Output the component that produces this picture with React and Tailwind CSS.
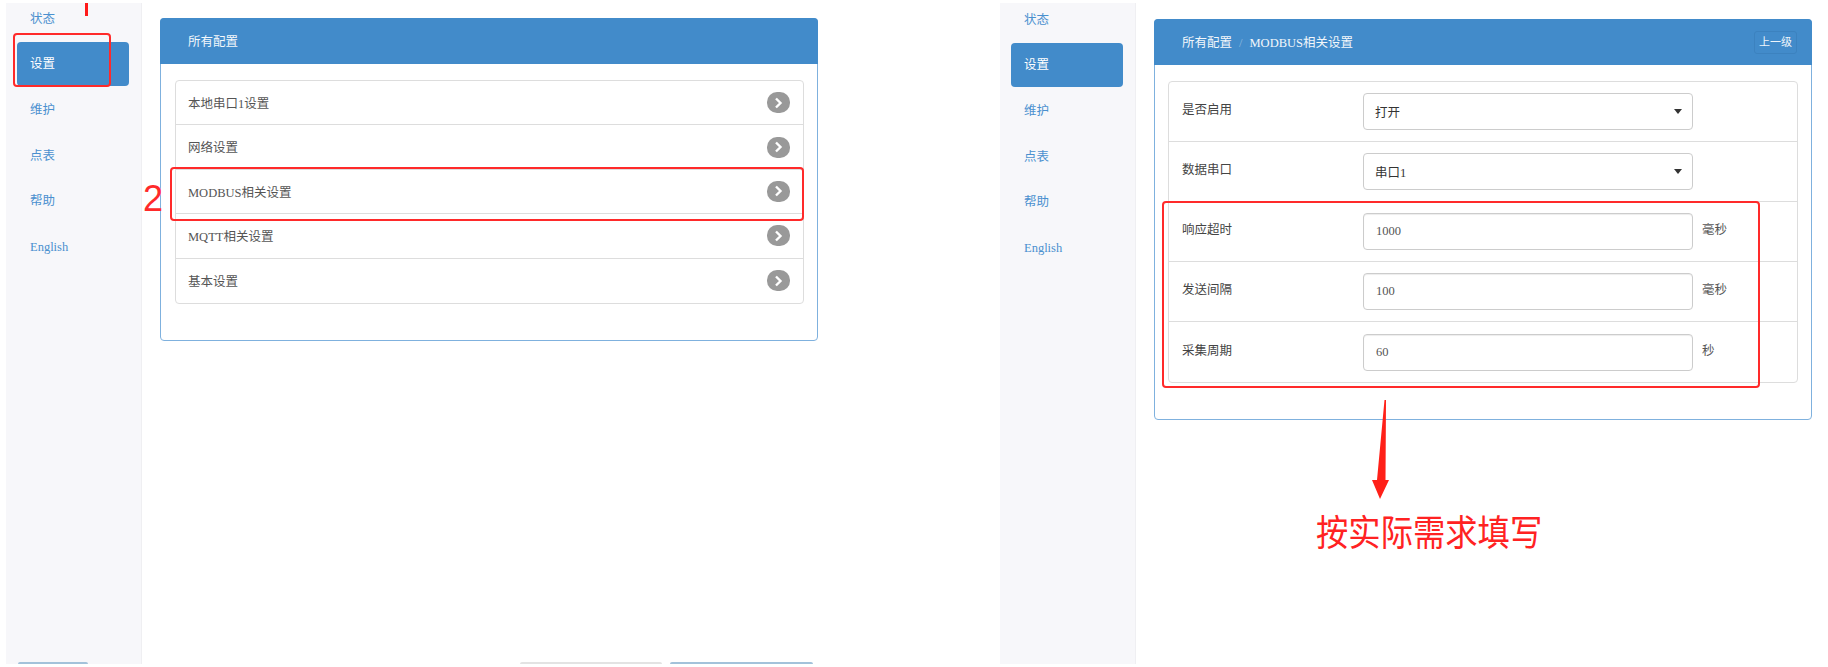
import React from 'react'

const font = 'font-["Liberation_Serif","Noto_Sans_CJK_SC",serif]'
const menu = ['状态', '设置', '维护', '点表', '帮助', 'English']
const configs = ['本地串口1设置', '网络设置', 'MODBUS相关设置', 'MQTT相关设置', '基本设置']
const fields = [
  { label: '响应超时', value: '1000', unit: '毫秒' },
  { label: '发送间隔', value: '100', unit: '毫秒' },
  { label: '采集周期', value: '60', unit: '秒' },
]

function Sidebar({ sliver, listClass }) {
  return (
    <aside className="flex h-[661px] w-[136px] flex-shrink-0 flex-col overflow-hidden border-r border-[#efeff2] bg-[#f7f7fa] pl-[11px]">
      <ul className={`flex w-[112px] flex-col gap-[1.6px] ${listClass}`}>
        {menu.map((item, i) => (
          <li
            key={item}
            className={`flex h-[44px] items-center rounded-[4px] pt-[2px] pl-[13px] ${i === 1 ? 'bg-[#428bca] text-white' : 'text-[#4a90cf]'}`}
          >
            {item}
          </li>
        ))}
      </ul>
      {sliver && <div className="mt-auto ml-[1px] h-[2px] w-[70px] rounded-t-[2px] bg-[#a3c2da]"></div>}
    </aside>
  )
}

function Chevron() {
  return (
    <span className="flex h-[21px] w-[23px] items-center justify-center rounded-[10px] bg-[#999999]">
      <svg width="9" height="12" viewBox="0 0 9 12" fill="none">
        <path d="M2 1.5 L6.5 6 L2 10.5" stroke="white" strokeWidth="2.4" />
      </svg>
    </span>
  )
}

function Panel({ title, action, bodyClass, children }) {
  return (
    <section className={`rounded-[4px] border border-[#7fb1de] ${bodyClass}`}>
      <header className="-mx-[1px] -mt-[1px] flex h-[46px] items-center justify-between rounded-t-[4px] bg-[#428bca] pr-[15px] pl-[28px] text-[#f2f7fb]">
        <span className="pt-[2px]">{title}</span>
        {action}
      </header>
      {children}
    </section>
  )
}

function FormRow({ label, unit, last, children }) {
  return (
    <div className={`flex h-[60px] items-center pl-[13px] ${last ? '' : 'border-b border-[#dddddd]'}`}>
      <span className="w-[181px] flex-shrink-0 pb-[2px] text-[#444]">{label}</span>
      {children}
      {unit && <span className="ml-[9px] pb-[2px] text-[#555]">{unit}</span>}
    </div>
  )
}

function Select({ value }) {
  return (
    <div className="flex h-[37px] w-[330px] items-center justify-between rounded-[4px] border border-[#cccccc] bg-white pr-[10px] pl-[11px] text-[#333]">
      <span className="pt-[3px]">{value}</span>
      <span className="h-0 w-0 border-x-[4px] border-t-[5px] border-x-transparent border-t-[#333]"></span>
    </div>
  )
}

export default function App() {
  return (
    <div className={`relative flex h-[667px] w-[1828px] overflow-hidden bg-white pt-[3px] pl-[6px] text-[12.5px] leading-none ${font}`}>
      {/* left screenshot */}
      <Sidebar sliver listClass="-mt-[7px]" />
      <main className="ml-[18px] flex h-[661px] w-[658px] flex-shrink-0 flex-col pt-[15px]">
        <Panel title="所有配置" bodyClass="h-[323px]">
          <ul className="mt-[16px] mr-[13px] ml-[14px] rounded-[4px] border border-[#dddddd]">
            {configs.map((item, i) => (
              <li
                key={item}
                className={`flex h-[44.4px] items-center justify-between pr-[13px] pl-[12px] text-[#555] ${i < configs.length - 1 ? 'border-b border-[#dddddd]' : ''}`}
              >
                <span className="pt-[3px]">{item}</span>
                <Chevron />
              </li>
            ))}
          </ul>
        </Panel>
        <div className="mt-auto flex justify-end gap-[8px] pr-[5px]">
          <div className="h-[2px] w-[142px] rounded-t-[2px] bg-[#e3e3e3]"></div>
          <div className="h-[2px] w-[143px] rounded-t-[2px] bg-[#a3c2da]"></div>
        </div>
      </main>

      {/* right screenshot */}
      <div className="ml-[182px]">
        <Sidebar listClass="-mt-[6px]" />
      </div>
      <main className="ml-[18px] w-[658px] flex-shrink-0 pt-[16px]">
        <Panel
          bodyClass="h-[401px]"
          title={
            <span className="flex items-center">
              所有配置
              <span className="mx-[7px] text-[#8db9df]">/</span>
              MODBUS相关设置
            </span>
          }
          action={
            <span className="flex h-[23px] w-[43px] items-center justify-center rounded-[3px] border border-[#3c82bf] text-[11px] text-[#eef5fb]">
              上一级
            </span>
          }
        >
          <div className="mx-[13px] mt-[16px] rounded-[4px] border border-[#dddddd]">
            <FormRow label="是否启用"><Select value="打开" /></FormRow>
            <FormRow label="数据串口"><Select value="串口1" /></FormRow>
            {fields.map((f, i) => (
              <FormRow key={f.label} label={f.label} unit={f.unit} last={i === fields.length - 1}>
                <input
                  readOnly
                  defaultValue={f.value}
                  className="h-[37px] w-[330px] rounded-[4px] border border-[#cccccc] bg-white px-[12px] text-[#555] shadow-[inset_0_1px_1px_rgba(0,0,0,0.075)]"
                />
              </FormRow>
            ))}
          </div>
        </Panel>
      </main>

      {/* red annotations drawn over the screenshots */}
      <div className="absolute top-[3px] left-[85px] h-[13px] w-[3px] bg-[#ff1a1a]"></div>
      <div className="absolute top-[33px] left-[13px] h-[54px] w-[98px] rounded-[4px] border-2 border-[#ff2a2a]"></div>
      <div className="absolute top-[181px] left-[143px] text-[36px] leading-[36px] text-[#ff2a2a] [font-family:'Liberation_Sans',sans-serif]">2</div>
      <div className="absolute top-[167px] left-[170px] h-[54px] w-[634px] rounded-[4px] border-2 border-[#ff2a2a]"></div>
      <div className="absolute top-[201px] left-[1162px] h-[187px] w-[598px] rounded-[4px] border-2 border-[#ff2a2a]"></div>
      <svg className="absolute top-[400px] left-[1370px]" width="22" height="100" viewBox="0 0 22 100">
        <polygon points="14.5,0 16,0 15.5,80 19,80 10,99 2,80 7,80" fill="#ff2018" />
      </svg>
      <div className="absolute top-[515px] left-[1316px] origin-top-left scale-x-[1.01] scale-y-[1.14] text-[32px] leading-[33px] whitespace-nowrap text-[#ff2222]">
        按实际需求填写
      </div>
    </div>
  )
}
